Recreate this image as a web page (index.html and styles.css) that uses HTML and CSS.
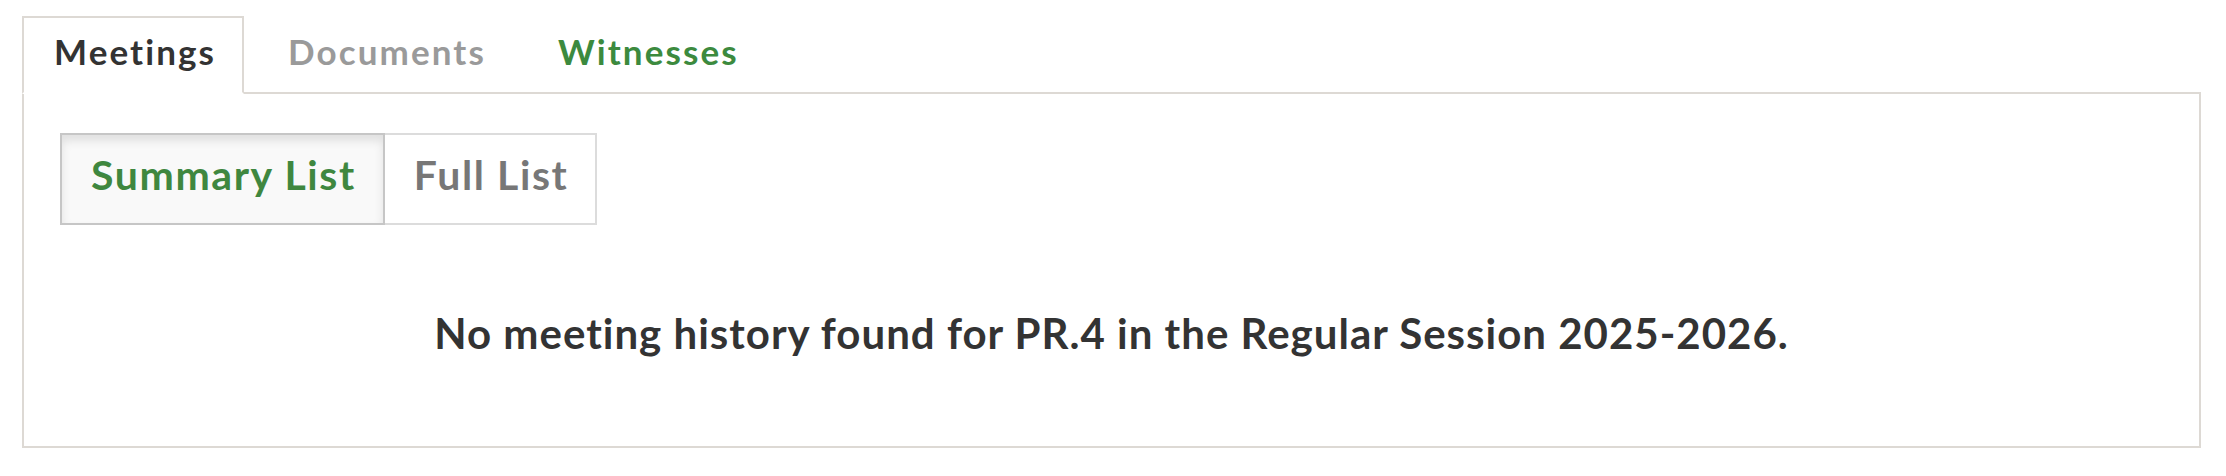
FILE: index.html
```html
<!DOCTYPE html>
<html lang="en">
<head>
<meta charset="utf-8">
<title>Meetings</title>
<link rel="stylesheet" href="styles.css">
</head>
<body>
<div class="page">
  <ul class="tabs">
    <li class="tab tab-active">Meetings</li>
    <li class="tab tab-muted">Documents</li>
    <li class="tab tab-green">Witnesses</li>
  </ul>
  <div class="panel">
    <div class="btn-group">
      <span class="btn btn-active">Summary List</span>
      <span class="btn btn-plain">Full List</span>
    </div>
    <p class="message">No meeting history found for PR.4 in the Regular Session 2025-2026.</p>
  </div>
</div>
</body>
</html>
```

FILE: styles.css
```css
html, body {
  margin: 0;
  padding: 0;
  background: #ffffff;
}

body {
  font-family: "Lato", "Liberation Sans", sans-serif;
  font-weight: 700;
  font-variant-ligatures: none;
}

.page {
  padding: 16px 25px 0 22px;
}

.tabs {
  list-style: none;
  margin: 0;
  padding: 0;
  display: flex;
  position: relative;
  z-index: 1;
}

.tab {
  font-size: 35px;
  letter-spacing: 2.1px;
  line-height: 67px;
  padding: 0 26px 7px 30px;
  border: 2px solid transparent;
  margin-right: 12px;
  margin-bottom: -2px;
  white-space: nowrap;
}

.tab-active {
  color: #333333;
  border-color: #ddd9d4;
  border-bottom-color: #ffffff;
  background: #ffffff;
}

.tab-muted {
  color: #9a9a9a;
}

.tab-green {
  color: #3c8a3e;
}

.panel {
  border: 2px solid #ddd9d4;
  padding: 39px 36px 88px;
}

.btn-group {
  display: flex;
}

.btn {
  font-size: 41px;
  letter-spacing: 1.6px;
  line-height: 80px;
  padding: 0 27px 8px 29px;
  border: 2px solid #dcdcdc;
  white-space: nowrap;
}

.btn-active {
  color: #3f873f;
  background: #f9f9f9;
  border-color: #c6c6c6;
  box-shadow: inset 0 6px 10px rgba(0, 0, 0, 0.1);
}

.btn-plain {
  color: #777777;
  background: #ffffff;
  border-left: none;
}

.message {
  margin: 83px 0 0;
  font-size: 42px;
  letter-spacing: 1px;
  line-height: 50px;
  color: #333333;
  text-align: center;
}
```
